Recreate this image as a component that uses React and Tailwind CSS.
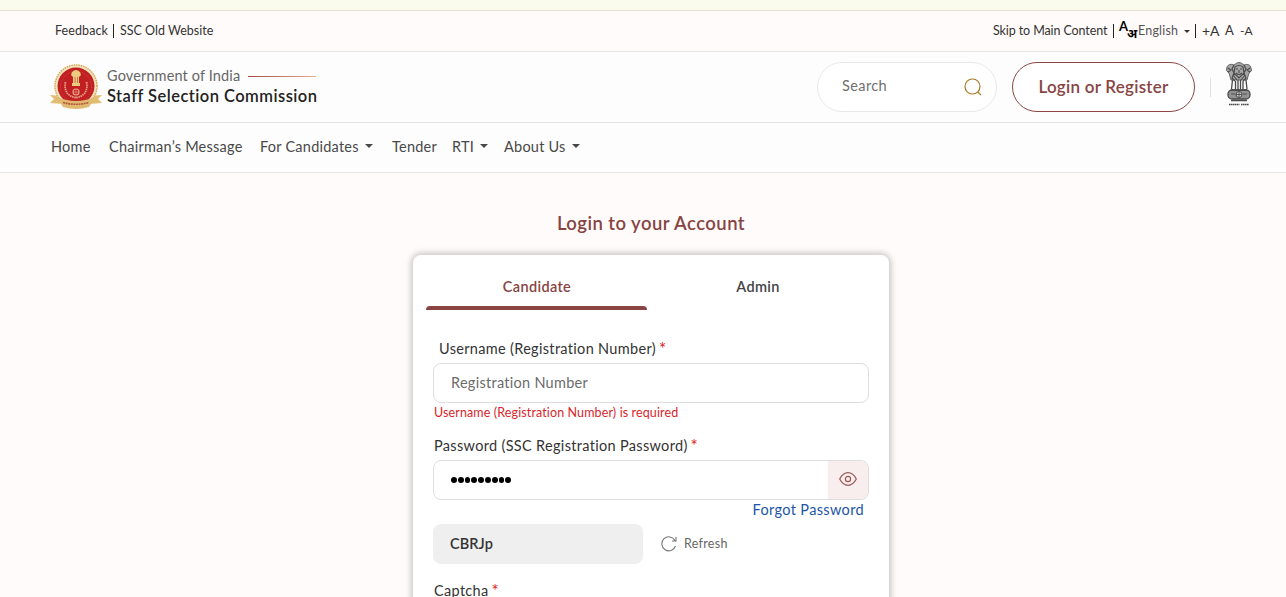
import { useState } from "react";

const navItems = [
  { label: "Home", width: "w-[58px]" },
  { label: "Chairman’s Message", width: "w-[151px]" },
  { label: "For Candidates", width: "w-[132px]", menu: true },
  { label: "Tender", width: "w-[60px]" },
  { label: "RTI", width: "w-[52px]", menu: true },
  { label: "About Us", width: "w-[80px]", menu: true },
];

const Caret = ({ className }) => (
  <svg className={className} viewBox="0 0 8 4" fill="currentColor">
    <path d="M0 0h8L4 4z" />
  </svg>
);

const SscLogo = () => (
  <svg className="w-[52px] h-[46px] shrink-0" viewBox="0 0 52 46">
    <path d="M0 31l13 1v8L0 39l4-4zM52 31l-13 1v8l13-1-4-4z" fill="#e2bd72" />
    <circle cx="26" cy="22" r="21.5" fill="#f3e3bd" />
    <circle cx="26" cy="22" r="21" fill="none" stroke="#d3a759" strokeWidth="1.5" strokeDasharray="1.4 1" />
    <circle cx="26" cy="22" r="18.5" fill="#c11f22" />
    <circle cx="26" cy="23" r="15.5" fill="none" stroke="#cf5349" strokeWidth="1" strokeDasharray="1 1.4" />
    <path d="M15.5 18c-2 9 3 15 10.5 15.5M36.5 18c2 9-3 15-10.5 15.5" fill="none" stroke="#e5a587" strokeWidth="1.8" strokeDasharray="1.5 .7" />
    <path d="M22 8q4-4 8 0l1 3-2 2v6h1v3h-8v-3h1v-6l-2-2z" fill="#eccb7e" />
    <path d="M25 13v6M27.5 13v6" stroke="#b55630" strokeWidth=".7" />
    <circle cx="26" cy="28" r="3" fill="none" stroke="#e5a587" strokeWidth="1.2" />
    <path d="M26 25v6M23 28h6" stroke="#e5a587" strokeWidth=".6" />
    <path d="M7 33q19 8 38 0l-6 10q-13 4-26 0z" fill="#e0ba70" />
    <path d="M13 38.5q13 3.5 26 0" fill="none" stroke="#b5563a" strokeWidth="1.6" strokeDasharray="2 .6" />
  </svg>
);

const NationalEmblem = () => (
  <svg className="w-[26px] h-[45px] -mt-[6px]" viewBox="0 0 26 45" fill="none" stroke="#4a4a4a">
    <path d="M8 3q5-5 10 0 6-2 7 3 2 3-2 5l-2 7H5L3 11Q-1 9 1 5q2-4 7-2z" fill="#a6a6a6" strokeWidth=".8" />
    <path d="M8 3l-2 4 2 4-2 5 3 3M18 3l2 4-2 4 2 5-3 3M9 5q4-3 8 0l1 6-5 5-5-5z" strokeWidth="1.2" />
    <path d="M10 7h2M14 7h2M10 11q3 3 6 0M13 8v3M2 6l3 2-3 2M24 6l-3 2 3 2M7 13l4 5M19 13l-4 5" strokeWidth="1.1" />
    <path d="M6.5 18l-1 9M9.5 19v8M12 18v9M14.5 18v9M17 19v8M20 18l1 9" strokeWidth="1.3" />
    <rect x="2" y="28" width="22" height="9" rx="4" fill="#929292" strokeWidth="1.3" />
    <path d="M5 28h16M5 38.5h16" strokeWidth="1.5" />
    <circle cx="13" cy="32.5" r="3" fill="#ccc" />
    <path d="M10 32.5h6M13 30v5M5 32h4M17 32h4" strokeWidth=".9" />
    <path d="M3 42.5h10.5M15 42.5h8" strokeWidth="1.6" strokeDasharray="1.5 .4" />
  </svg>
);

const TopBar = () => (
  <div className="h-[41px] border-b border-[#e5e4e4] bg-[#fffbfa] flex items-center justify-between pl-[55px] pr-[33px] text-[12.5px] text-[#333]">
    <div className="flex items-center whitespace-nowrap">
      <span className="w-[58px] tracking-[0.1px]">Feedback</span>
      <span className="w-px h-[14px] bg-[#222] mr-[6px]"></span>
      <span>SSC Old Website</span>
    </div>
    <div className="flex items-center whitespace-nowrap">
      <span className="w-[120px] tracking-[-0.1px]">Skip to Main Content</span>
      <span className="w-px h-[14px] bg-[#222]"></span>
      <span className="flex w-[24px] pl-[5px] font-bold text-black leading-none">
        <span className="w-[8px] text-[13px] -mt-[2px]">A</span>
        <span className="text-[12px] mt-[6px] font-['Noto_Sans',sans-serif]">अ</span>
      </span>
      <span className="w-[46px] text-[#555] tracking-[0.2px]">English</span>
      <Caret className="w-[6px] h-[3px] text-[#333]" />
      <span className="w-px h-[14px] bg-[#222] ml-[5px] mr-[6px]"></span>
      <span className="w-[23px] text-[14px] -mt-[2px]">+A</span>
      <span className="w-[15px] text-[13px]">A</span>
      <span className="w-[13px] text-[12px]">-A</span>
    </div>
  </div>
);

const Header = () => (
  <header className="h-[71px] border-b border-[#e5e5e5] bg-[#fdfdfd] flex items-center justify-between pl-[50px] pr-[34px]">
    <div className="flex items-center">
      <SscLogo />
      <div className="ml-[5px] -mt-[2px] whitespace-nowrap">
        <div className="flex items-center h-5 text-[14.5px] tracking-[0.13px] text-[#666]">
          <span className="w-[141px]">Government of India</span>
          <svg className="w-[68px] h-px" viewBox="0 0 68 1" preserveAspectRatio="none">
            <defs>
              <linearGradient id="rule" x1="0" x2="1" y1="0" y2="0">
                <stop offset="0" stopColor="#a34842" />
                <stop offset="1" stopColor="#e3ae8c" />
              </linearGradient>
            </defs>
            <rect width="68" height="1" fill="url(#rule)" />
          </svg>
        </div>
        <div className="h-5 leading-5 text-[16.5px] tracking-[0.46px] font-semibold text-[#222]">Staff Selection Commission</div>
      </div>
    </div>
    <div className="flex items-center">
      <div className="w-[180px] h-[50px] rounded-full border border-[#e9e9e9] bg-white flex items-center justify-between pl-[24px] pr-[14px] text-[14.5px] tracking-[0.4px] text-[#707070]">
        <span className="-mt-[2px]">Search</span>
        <svg className="w-[18px] h-[18px]" viewBox="0 0 18 18" fill="none" stroke="#ab7b26" strokeWidth="1.2">
          <circle cx="8.5" cy="8.5" r="7.5" />
          <path d="M13.8 14l3.2 3" />
        </svg>
      </div>
      <button className="ml-[15px] w-[183px] h-[50px] rounded-full border border-[#8b4543] bg-white text-[17px] tracking-[0.25px] font-semibold text-[#884442]">
        Login or Register
      </button>
      <span className="w-px h-[19px] bg-[#e2e2e2] ml-[15px] mr-[15px]"></span>
      <NationalEmblem />
    </div>
  </header>
);

const Nav = () => (
  <nav className="h-[50px] border-b border-[#e5e5e5] bg-[#fdfdfd] flex items-center pl-[51px] pb-px text-[14.5px] tracking-[0.24px] text-[#484848]">
    {navItems.map((item) => (
      <a key={item.label} href="#" className={`flex items-center whitespace-nowrap shrink-0 ${item.width}`}>
        {item.label}
        {item.menu && <Caret className="w-[8px] h-[4px] ml-[6px] -mt-[2px]" />}
      </a>
    ))}
  </nav>
);

const Label = ({ children, className = "" }) => (
  <label className={`flex h-5 leading-[21px] text-[14.5px] tracking-[0.32px] text-[#333] whitespace-nowrap ${className}`}>
    {children}
    <span className="ml-[3px] text-[17px] text-[#e21b1b]">*</span>
  </label>
);

const LoginCard = () => {
  const [tab, setTab] = useState("Candidate");

  return (
    <section className="w-[476px] h-[400px] ml-[413px] mt-[20px] rounded-lg bg-white shadow-[0_0_6px_2px_rgba(0,0,0,0.22)] pt-[14px] px-[13px]">
      <div className="flex">
        {["Candidate", "Admin"].map((name) => (
          <button
            key={name}
            onClick={() => setTab(name)}
            className={`w-[221px] h-[41px] pb-[5px] pl-[1px] relative text-[14.5px] tracking-[0.35px] font-semibold ${tab === name ? "text-[#884442]" : "text-[#444]"}`}
          >
            {name}
            {tab === name && <span className="absolute left-0 bottom-0 w-full h-[4px] rounded-t-[4px] bg-[#884442]"></span>}
          </button>
        ))}
      </div>

      <form className="mt-[28px] ml-[7px] w-[436px]">
        <Label className="pl-[6px]">Username (Registration Number)</Label>
        <input
          placeholder="Registration Number"
          className="block mt-[5px] w-full h-[40px] rounded-[8px] border border-[#dedede] px-[17px] pb-[2px] text-[14.5px] tracking-[0.28px] placeholder:text-[#6c6c6c]"
        />
        <p className="h-[18px] leading-[19px] pl-[1px] text-[12.5px] tracking-[0.12px] text-[#d9252b] whitespace-nowrap">Username (Registration Number) is required</p>

        <Label className="mt-[14px] pl-[1px]">Password (SSC Registration Password)</Label>
        <div className="mt-[5px] flex h-[40px] rounded-[8px] border border-[#dedede] overflow-hidden">
          <div className="flex-1 flex items-center gap-[1px] pl-[17px]">
            {Array.from({ length: 9 }).map((_, i) => (
              <span key={i} className="w-[5.8px] h-[5.8px] rounded-full bg-black"></span>
            ))}
          </div>
          <button type="button" className="w-[40px] flex items-center justify-center pb-[2px] bg-[#f8eeee]">
            <svg className="w-[18px] h-[14px]" viewBox="0 0 18 14" fill="none" stroke="#9b5755" strokeWidth="1.2">
              <path d="M.7 7Q4 .7 9 .7T17.3 7Q14 13.3 9 13.3T.7 7z" />
              <circle cx="9" cy="7" r="2.6" />
            </svg>
          </button>
        </div>
        <a href="#" className="block h-5 leading-[20px] pr-[5px] text-right text-[14.5px] tracking-[0.35px] text-[#2255a8]">Forgot Password</a>

        <div className="mt-[4px] flex items-center">
          <div className="w-[210px] h-[40px] rounded-[8px] bg-[#efefef] pl-[17px] leading-[40px] text-[14.5px] tracking-[0.1px] font-semibold text-[#333]">CBRJp</div>
          <svg className="w-[16px] h-[16px] ml-[18px]" viewBox="0 0 16 16" fill="none" stroke="#777" strokeWidth="1.1">
            <path d="M14.5 10A7 7 0 1 1 14 4.5M15 1v4h-4" />
          </svg>
          <span className="ml-[7px] text-[12.5px] tracking-[0.3px] text-[#666]">Refresh</span>
        </div>
        <Label className="mt-[16px] pl-[1px]">Captcha</Label>
      </form>
    </section>
  );
};

export default function App() {
  return (
    <div className="h-[597px] overflow-hidden bg-[#fffbfa] font-['Lato','Liberation_Sans',sans-serif]">
      <div className="h-[11px] bg-[#fafbed] border-b border-[#e2dfd0]"></div>
      <TopBar />
      <Header />
      <Nav />
      <main>
        <h1 className="mt-[38px] h-6 leading-6 pl-4 text-center text-[18.5px] tracking-[0.45px] font-semibold text-[#884442]">Login to your Account</h1>
        <LoginCard />
      </main>
    </div>
  );
}
